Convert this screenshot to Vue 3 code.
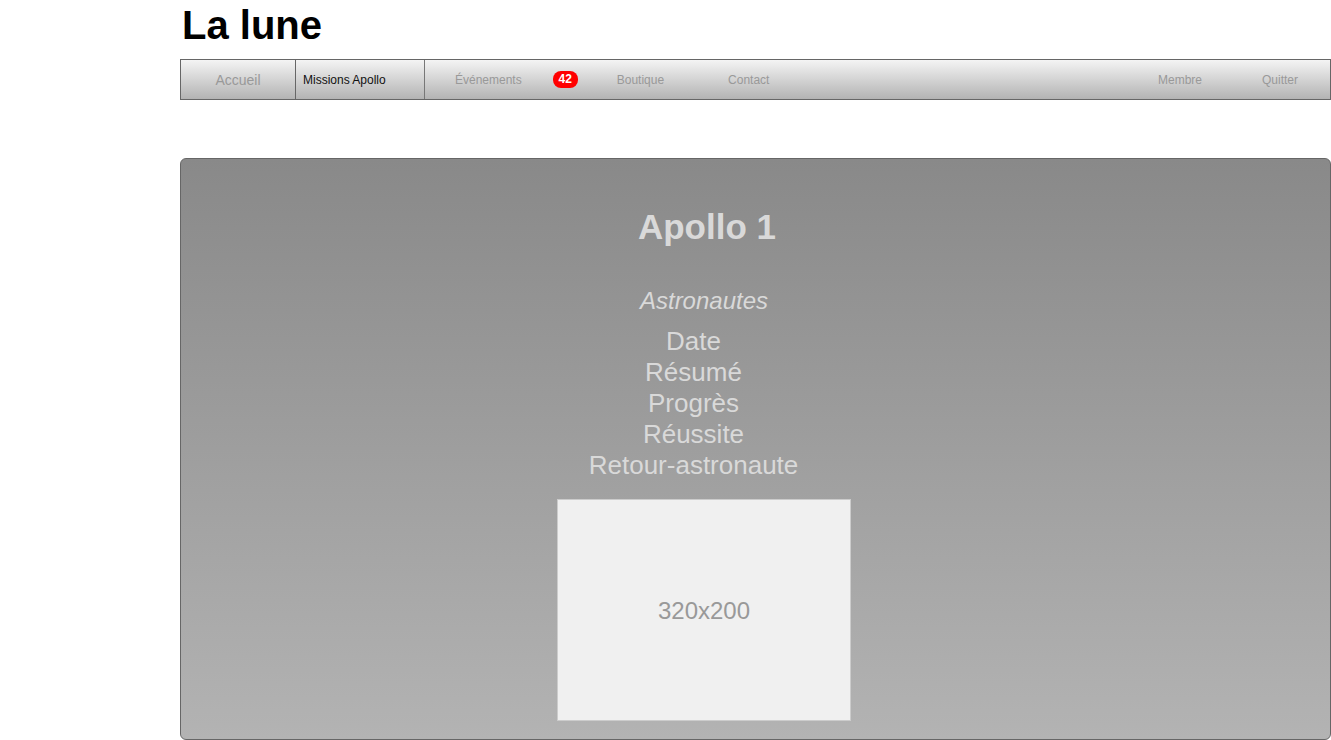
<script setup>
const details = ['Date', 'Résumé', 'Progrès', 'Réussite', 'Retour-astronaute']
</script>

<template>
  <div class="page">
    <h1 class="site-title">La lune</h1>

    <nav class="bar">
      <a class="home" href="#accueil">Accueil</a>
      <a class="current" href="#missions" aria-current="page">Missions Apollo</a>
      <a class="events" href="#evenements">Événements <span class="badge">42</span></a>
      <a class="shop" href="#boutique">Boutique</a>
      <a href="#contact">Contact</a>
      <div class="account">
        <a href="#membre">Membre</a>
        <a href="#quitter">Quitter</a>
      </div>
    </nav>

    <main class="panel">
      <h2 class="mission">Apollo 1</h2>
      <p class="crew">Astronautes</p>
      <ul class="details">
        <li v-for="item in details" :key="item">{{ item }}</li>
      </ul>
      <div class="picture">320x200</div>
    </main>
  </div>
</template>

<style>
body {
  background: #fff;
}
</style>

<style scoped>
.page {
  padding-left: 180px;
  font-family: "Liberation Sans", Arial, sans-serif;
}

.site-title {
  margin: 0;
  padding: 2px 0 11px 2px;
  font-size: 40px;
  line-height: 46px;
  color: #000;
}

.bar {
  display: flex;
  height: 39px;
  border: 1px solid #666;
  background: linear-gradient(#f4f4f4, #b3b3b3);
  font-size: 12px;
  line-height: 41px;
}

.bar a {
  color: #999;
  text-decoration: none;
  white-space: nowrap;
}

.bar .home {
  width: 114px;
  border-right: 1px solid #666;
  font-size: 14px;
  text-align: center;
}

.bar .current {
  width: 121px;
  padding-left: 7px;
  border-right: 1px solid #777;
  color: #111;
}

.bar .events {
  display: flex;
  gap: 31px;
  margin: 0 39px 0 30px;
}

.badge {
  align-self: center;
  width: 25px;
  border-radius: 8px;
  background: #f00;
  color: #fff;
  font-weight: bold;
  line-height: 17px;
  text-align: center;
}

.bar .shop {
  margin-right: 64px;
}

.account {
  display: flex;
  gap: 60px;
  margin-left: auto;
  padding-right: 32px;
}

.panel {
  display: flex;
  flex-direction: column;
  align-items: center;
  margin-top: 58px;
  padding: 47px 103px 18px 0;
  border: 1px solid #666;
  border-radius: 6px;
  background: linear-gradient(#898989, #b3b3b3);
  color: #d9d9d9;
}

.mission {
  margin: 0;
  padding-left: 6px;
  font-size: 35px;
  line-height: 42px;
}

.crew {
  margin: 39px 0 11px;
  font-size: 24px;
  font-style: italic;
  line-height: 28px;
}

.details {
  margin: 0;
  padding: 0 21px 0 0;
  list-style: none;
  font-size: 26px;
  line-height: 31px;
  text-align: center;
}

.picture {
  box-sizing: border-box;
  width: 294px;
  height: 222px;
  margin-top: 18px;
  border: 1px solid #ccc;
  background: #f0f0f0;
  color: #999;
  font-size: 24px;
  line-height: 222px;
  text-align: center;
}
</style>
